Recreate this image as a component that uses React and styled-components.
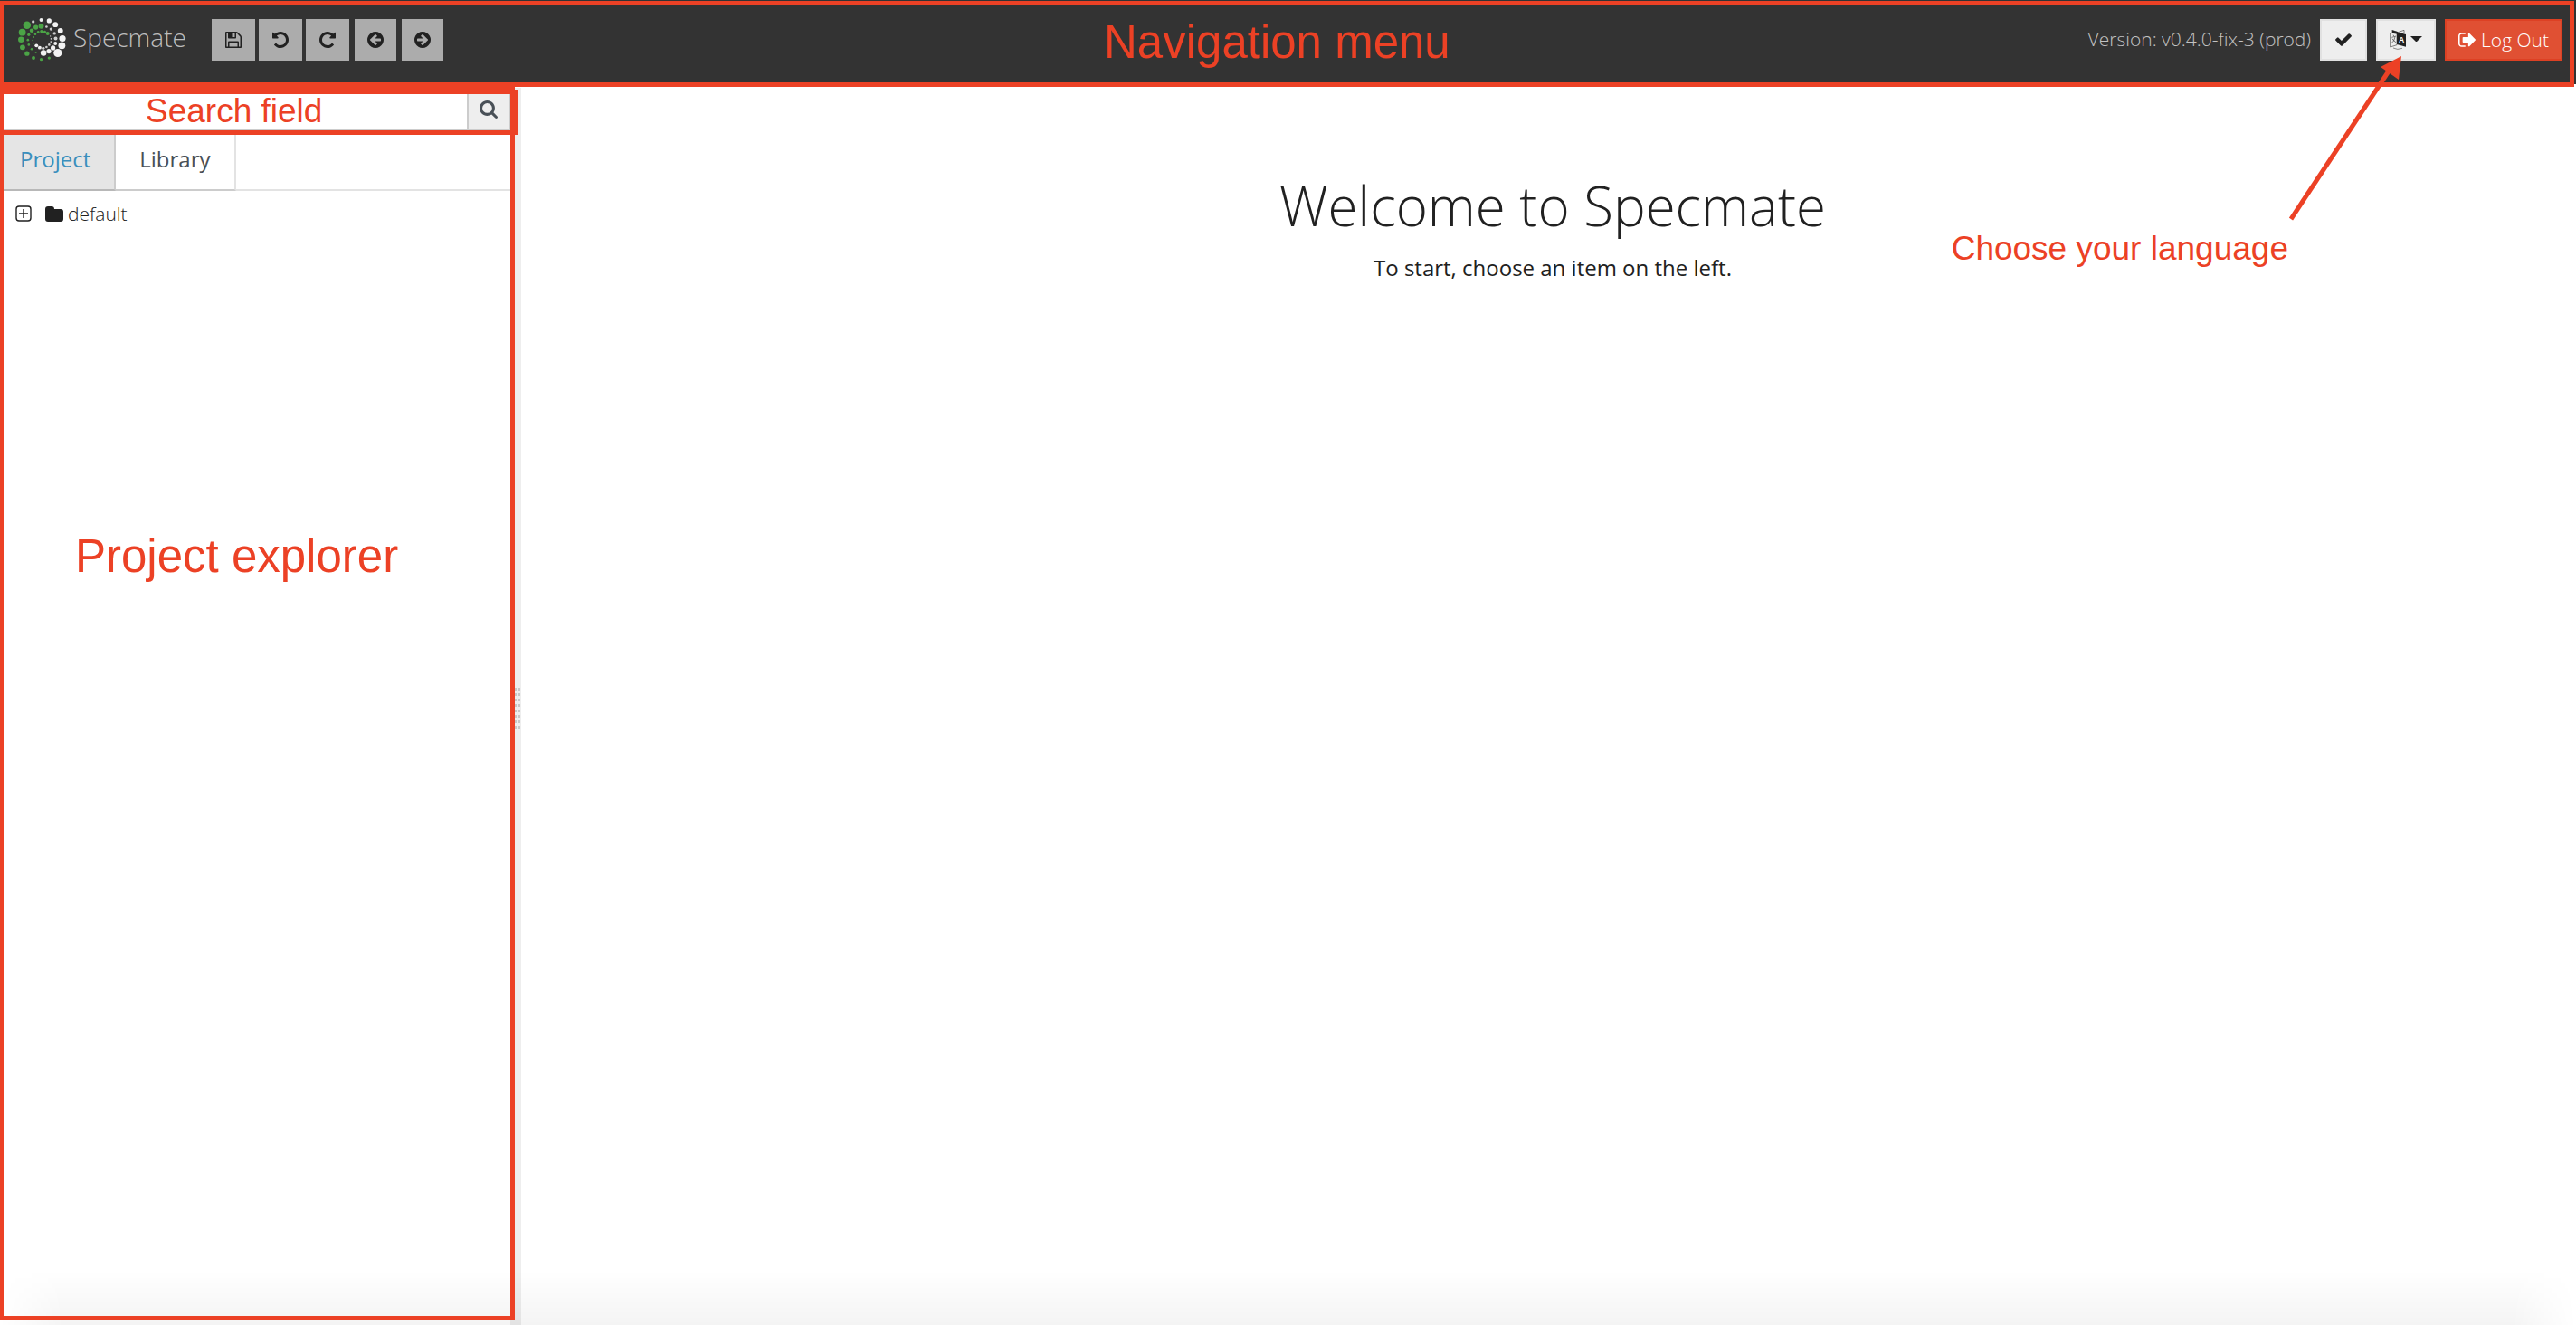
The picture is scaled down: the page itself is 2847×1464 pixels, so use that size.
import React from "react";
import styled, { createGlobalStyle, css } from "styled-components";

const red = "#ec4125";
const ink = "#212121";

const GlobalStyle = createGlobalStyle`
  *, *::before, *::after { box-sizing: border-box; }
  body {
    margin: 0;
    background: #fff;
    color: ${ink};
    font-family: "Open Sans", "Noto Sans", sans-serif;
    font-weight: 300;
    font-size: 21px;
    line-height: 32px;
  }
  button, input { font: inherit; color: inherit; margin: 0; }
`;

const Page = styled.div`
  position: relative;
  display: flex;
  flex-direction: column;
  min-height: 100vh;
`;

const Header = styled.header`
  position: relative;
  display: flex;
  justify-content: space-between;
  align-items: flex-start;
  padding: 21px 15px 26px 20px;
  background: #333;
`;

const Brand = styled.a`
  display: flex;
  align-items: center;
  gap: 8px;
  width: 214px;
  height: 44px;
  color: #bdbdbd;
  font-size: 28px;
  line-height: 40px;
  text-decoration: none;
`;

const BrandMark = styled.svg`
  flex: none;
  width: 53px;
  height: 48px;
`;

const BrandName = styled.span`
  padding-bottom: 6px;
`;

const HeaderSide = styled.div`
  display: flex;
  align-items: center;
  gap: ${(p) => p.$gap || 0}px;
`;

const ToolGroup = styled.div`
  display: flex;
  gap: ${(p) => p.$gap}px;
  margin-right: 6px;
`;

const ToolButton = styled.button`
  display: flex;
  align-items: center;
  justify-content: center;
  width: ${(p) => p.$width}px;
  height: 46px;
  padding: 0;
  border: 0;
  background: #acacac;
  color: ${ink};
`;

const variants = {
  light: css`
    background: #eee;
    border-color: #e1e1e1;
    color: ${ink};
  `,
  danger: css`
    background: #e05033;
    border-color: #dd4124;
    color: #fff;
  `,
};

const ActionButton = styled.button`
  display: flex;
  align-items: center;
  justify-content: center;
  gap: ${(p) => p.$gap || 0}px;
  height: 46px;
  padding: 0 13px;
  border: 2px solid;
  line-height: 32px;
  ${(p) => variants[p.$variant]}
`;

const Version = styled.span`
  padding-bottom: 2px;
  color: #c2c2c2;
`;

const Glyph = styled.svg`
  display: block;
  flex: none;
  width: ${(p) => p.$w}px;
  height: ${(p) => p.$h || p.$w}px;
  fill: currentColor;
`;

const Body = styled.div`
  display: flex;
  flex: 1;
`;

const Sidebar = styled.aside`
  display: flex;
  flex-direction: column;
  flex: none;
  width: 564px;
  padding-top: 4px;
`;

const SearchRow = styled.form`
  display: flex;
  height: 47px;
`;

const SearchInput = styled.input`
  flex: 1;
  min-width: 0;
  padding: 0 12px;
  border: 2px solid #ccc;
  background: #fff;
  outline: none;
`;

const SearchButton = styled.button`
  display: flex;
  align-items: center;
  justify-content: center;
  width: 46px;
  padding: 0;
  border: 2px solid #ccc;
  border-left: 0;
  background: #eee;
  color: #495057;
`;

const Tabs = styled.nav`
  display: flex;
  height: 67px;
  border-bottom: 2px solid #e3e3e3;
`;

const Tab = styled.a`
  height: 67px;
  padding: 16px 26px 0 ${(p) => (p.$active ? 22 : 26)}px;
  border-right: 2px solid ${(p) => (p.$active ? "#ccc" : "#e3e3e3")};
  border-bottom: 2px solid ${(p) => (p.$active ? "#b8b8b8" : "#ccc")};
  background: ${(p) => (p.$active ? "#e5e5e5" : "#fff")};
  color: ${(p) => (p.$active ? "#3a8fbd" : "#495057")};
  font-size: 24px;
  font-weight: 400;
  text-decoration: none;
`;

const Tree = styled.ul`
  margin: 0;
  padding: 9px 17px;
  list-style: none;
`;

const TreeItem = styled.li`
  display: flex;
  align-items: center;
`;

const TreeToggle = styled.button`
  display: flex;
  padding: 0;
  border: 0;
  background: none;
  margin-right: 15px;
`;

const TreeLink = styled.a`
  display: flex;
  align-items: center;
  gap: 5px;
  color: ${ink};
  text-decoration: none;
`;

const Splitter = styled.div`
  display: flex;
  flex: none;
  align-items: center;
  justify-content: flex-end;
  width: 12px;
  margin-top: 4px;
  padding-right: 1px;
  background: #eee;
`;

const Grip = styled.span`
  width: 8px;
  height: 48px;
  background: conic-gradient(from 90deg at 1px 3px, transparent 270deg, transparent 0) 0 0 / 4px 6px,
    linear-gradient(#eee 50%, transparent 50%) 0 0 / 8px 6px,
    linear-gradient(90deg, #eee 25%, #c8c8c8 25%) 0 0 / 4px 6px;
`;

const Main = styled.main`
  flex: 1;
  padding: 88px 0 0 9px;
  text-align: center;
`;

const Title = styled.h1`
  margin: 0;
  font-size: 60px;
  font-weight: 300;
  line-height: 92px;
`;

const Lead = styled.p`
  margin: 7px 0 0;
  font-size: 24px;
  font-weight: 400;
  line-height: 32px;
`;

const BottomShade = styled.div`
  position: absolute;
  right: 0;
  bottom: 0;
  left: 0;
  height: 60px;
  background: linear-gradient(transparent, rgba(0, 0, 0, 0.045));
  mask-image: linear-gradient(90deg, transparent, #000 70px, #000 calc(100% - 70px), transparent);
  pointer-events: none;
`;

const Frame = styled.div`
  position: absolute;
  top: ${(p) => p.$top}px;
  right: ${(p) => p.$right || "auto"};
  bottom: ${(p) => p.$bottom || "auto"};
  left: 0;
  width: ${(p) => p.$width || "auto"};
  height: ${(p) => p.$height || "auto"};
  border: 5px solid ${red};
  border-left-width: 4px;
  pointer-events: none;
`;

const Callout = styled.div`
  position: absolute;
  top: ${(p) => p.$top}px;
  left: ${(p) => p.$left || "auto"};
  right: ${(p) => p.$right || "auto"};
  color: ${red};
  font-family: "Liberation Sans", Arial, sans-serif;
  font-weight: 400;
  font-size: ${(p) => p.$size}px;
  line-height: 1;
  white-space: nowrap;
  pointer-events: none;
`;

const Arrow = styled.svg`
  position: absolute;
  top: 60px;
  right: 187px;
  width: 130px;
  height: 190px;
  pointer-events: none;
`;

const GREEN = "#4ba446";
const WHITE = "#f2f2f2";
const DIM = "#cfcfcf";
const dots = [
  [47, 44, 13, GREEN], [31, 68, 12, GREEN], [27, 93, 10, GREEN], [32, 119, 9, GREEN],
  [47, 140, 8, GREEN], [69, 155, 6, GREEN], [95, 160, 5, GREEN], [122, 155, 5, GREEN],
  [68, 32, 5, DIM], [95, 26, 6, WHITE], [122, 29, 8, WHITE], [143, 42, 9, WHITE],
  [160, 63, 9, WHITE], [167, 89, 11, WHITE], [165, 113, 12, WHITE], [151, 138, 14, WHITE],
  [95, 47, 9, GREEN], [77, 51, 8, GREEN], [63, 62, 7, GREEN], [53, 76, 5, GREEN],
  [50, 94, 4, GREEN], [53, 110, 4, GREEN], [63, 125, 4, GREEN], [77, 136, 3, GREEN],
  [113, 49, 4, DIM], [128, 57, 5, DIM], [140, 72, 5, DIM], [144, 89, 6, DIM],
  [143, 106, 6, WHITE], [135, 121, 8, WHITE], [121, 132, 8, WHITE], [103, 138, 10, WHITE],
  [117, 72, 6, GREEN], [107, 67, 5, GREEN], [96, 65, 5, GREEN], [85, 67, 4, GREEN],
  [75, 74, 4, GREEN], [69, 84, 3, GREEN], [66, 95, 2, GREEN], [69, 106, 2, GREEN],
  [79, 113, 6, WHITE], [90, 120, 6, WHITE], [102, 122, 5, DIM], [113, 118, 4, DIM],
  [122, 110, 4, DIM], [128, 100, 3, DIM], [129, 90, 3, DIM], [126, 81, 2, DIM],
];

const paths = {
  save: "M512 1536h768v-384h-768v384zm896 0h128v-896q0-14-10-38.5t-20-34.5l-281-281q-10-10-34-20t-39-10v416q0 40-28 68t-68 28h-576q-40 0-68-28t-28-68v-416h-128v1280h128v-416q0-40 28-68t68-28h832q40 0 68 28t28 68v416zm-384-928v-320q0-13-9.5-22.5t-22.5-9.5h-192q-13 0-22.5 9.5t-9.5 22.5v320q0 13 9.5 22.5t22.5 9.5h192q13 0 22.5-9.5t9.5-22.5zm640 32v928q0 40-28 68t-68 28h-1344q-40 0-68-28t-28-68v-1344q0-40 28-68t68-28h928q40 0 88 20t76 48l280 280q28 28 48 76t20 88z",
  undo: "M1536 896q0 156-61 298t-164 245-245 164-298 61q-172 0-327-72.5t-264-204.5q-7-10-6.5-22.5t8.5-20.5l137-138q10-9 25-9 16 2 23 12 73 95 179 147t225 52q104 0 198.5-40.5t163.5-109.5 109.5-163.5 40.5-198.5-40.5-198.5-109.5-163.5-163.5-109.5-198.5-40.5q-98 0-188 35.5t-160 101.5l137 138q31 30 14 69-17 40-59 40h-448q-26 0-45-19t-19-45v-448q0-42 40-59 39-17 69 14l130 129q107-101 244.5-156.5t284.5-55.5q156 0 298 61t245 164 164 245 61 298z",
  back: "M1408 960v-128q0-26-19-45t-45-19h-502l189-189q19-19 19-45t-19-45l-91-91q-18-18-45-18t-45 18l-362 362-91 91q-18 18-18 45t18 45l91 91 362 362q18 18 45 18t45-18l91-91q18-18 18-45t-18-45l-189-189h502q26 0 45-19t19-45zm256-64q0 209-103 385.5t-279.5 279.5-385.5 103-385.5-103-279.5-279.5-103-385.5 103-385.5 279.5-279.5 385.5-103 385.5 103 279.5 279.5 103 385.5z",
  check: "M1671 566q0 40-28 68l-724 724-136 136q-28 28-68 28t-68-28l-136-136-362-362q-28-28-28-68t28-68l136-136q28-28 68-28t68 28l294 295 656-657q28-28 68-28t68 28l136 136q28 28 28 68z",
  search: "M1216 832q0-185-131.5-316.5t-316.5-131.5-316.5 131.5-131.5 316.5 131.5 316.5 316.5 131.5 316.5-131.5 131.5-316.5zm512 832q0 52-38 90t-90 38q-54 0-90-38l-343-342q-179 124-399 124-143 0-273.5-55.5t-225-150-150-225-55.5-273.5 55.5-273.5 150-225 225-150 273.5-55.5 273.5 55.5 225 150 150 225 55.5 273.5q0 220-124 399l343 343q37 37 37 90z",
  signOut: "M704 1440q0 4 1 20t.5 26.5-3 23.5-10 19.5-20.5 6.5h-320q-119 0-203.5-84.5t-84.5-203.5v-704q0-119 84.5-203.5t203.5-84.5h320q13 0 22.5 9.5t9.5 22.5q0 4 1 20t.5 26.5-3 23.5-10 19.5-20.5 6.5h-320q-66 0-113 47t-47 113v704q0 66 47 113t113 47h312l11.5 1 11.5 3 8 5.5 7 9 2 13.5zm928-544q0 26-19 45l-544 544q-19 19-45 19t-45-19-19-45v-288h-448q-26 0-45-19t-19-45v-384q0-26 19-45t45-19h448v-288q0-26 19-45t45-19 45 19l544 544q19 19 19 45z",
};

const editTools = [
  { label: "Save", path: paths.save, box: "128 128 1536 1536" },
  { label: "Undo", path: paths.undo, box: "0 128 1536 1536" },
  { label: "Redo", path: paths.undo, box: "0 128 1536 1536", flip: "translate(1536 0) scale(-1 1)" },
];
const historyTools = [
  { label: "Back", path: paths.back, box: "128 128 1536 1536" },
  { label: "Forward", path: paths.back, box: "128 128 1536 1536", flip: "translate(1792 0) scale(-1 1)" },
];

function Tool({ tool, width }) {
  return (
    <ToolButton type="button" aria-label={tool.label} $width={width}>
      <Glyph $w={18} viewBox={tool.box} aria-hidden="true">
        <path d={tool.path} transform={tool.flip} />
      </Glyph>
    </ToolButton>
  );
}

function LanguageIcon() {
  return (
    <Glyph $w={18} $h={22} viewBox="0 0 54 66" aria-hidden="true">
      <path d="M2 12 L24 7 V50 L2 57 Z" fill="none" stroke="#444" strokeWidth="2" />
      <path d="M8 1 L28 8 L48 1 V9" fill="none" stroke="#444" strokeWidth="2" />
      <path d="M8 1 L27 7 V14 L8 11 Z" />
      <path d="M24 7 L54 15 V56 L24 48 Z" />
      <path d="M7 25 L21 21 M12 17 L14 21 M18 23 Q16 38 6 44 M9 29 Q14 38 21 41" fill="none" stroke="#333" strokeWidth="2" />
      <text x="30" y="42" fill="#fff" fontFamily="Liberation Sans, sans-serif" fontWeight="700" fontSize="26">A</text>
      <path d="M12 60 Q26 68 42 61" fill="none" stroke="#555" strokeWidth="2" />
    </Glyph>
  );
}

export default function App() {
  return (
    <>
      <GlobalStyle />
      <Page>
        <Header>
          <HeaderSide>
            <Brand href="#">
              <BrandMark viewBox="17 20 162 147" aria-hidden="true">
                {dots.map(([x, y, r, fill]) => (
                  <circle key={`${x}-${y}`} cx={x} cy={y} r={r} fill={fill} />
                ))}
              </BrandMark>
              <BrandName>Specmate</BrandName>
            </Brand>
            <ToolGroup $gap={4}>
              {editTools.map((tool) => <Tool key={tool.label} tool={tool} width={48} />)}
            </ToolGroup>
            <ToolGroup $gap={6}>
              {historyTools.map((tool) => <Tool key={tool.label} tool={tool} width={46} />)}
            </ToolGroup>
          </HeaderSide>
          <HeaderSide $gap={10}>
            <Version>Version: v0.4.0-fix-3 (prod)</Version>
            <ActionButton type="button" aria-label="Check" $variant="light">
              <Glyph $w={22} $h={16} viewBox="-60 330 1912 1200" aria-hidden="true">
                <path d={paths.check} />
              </Glyph>
            </ActionButton>
            <ActionButton type="button" aria-label="Language" $variant="light" $gap={5}>
              <LanguageIcon />
              <Glyph $w={13} $h={12} viewBox="0 0 13 12" aria-hidden="true">
                <path d="M0 2h13L7 8H6z" />
              </Glyph>
            </ActionButton>
            <ActionButton type="button" $variant="danger" $gap={6}>
              <Glyph $w={19} $h={16} viewBox="64 256 1568 1280" aria-hidden="true">
                <path d={paths.signOut} />
              </Glyph>
              Log Out
            </ActionButton>
          </HeaderSide>
        </Header>

        <Body>
          <Sidebar>
            <SearchRow role="search">
              <SearchInput type="text" aria-label="Search" />
              <SearchButton type="button" aria-label="Search">
                <Glyph $w={20} viewBox="64 128 1664 1664" aria-hidden="true">
                  <path d={paths.search} />
                </Glyph>
              </SearchButton>
            </SearchRow>
            <Tabs>
              <Tab href="#project" $active>Project</Tab>
              <Tab href="#library">Library</Tab>
            </Tabs>
            <Tree>
              <TreeItem>
                <TreeToggle type="button" aria-label="Expand default">
                  <Glyph $w={18} viewBox="0 0 18 18" aria-hidden="true">
                    <rect x="1" y="1" width="16" height="16" rx="3" fill="none" stroke={ink} strokeWidth="1.4" />
                    <path d="M4 8.3h10v1.4H4zM8.3 4h1.4v10H8.3z" />
                  </Glyph>
                </TreeToggle>
                <TreeLink href="#default">
                  <Glyph $w={20} $h={17} viewBox="0 0 20 17" aria-hidden="true">
                    <path d="M3 0h4a3 3 0 0 1 3 3h7a3 3 0 0 1 3 3v8a3 3 0 0 1-3 3H3a3 3 0 0 1-3-3V3a3 3 0 0 1 3-3z" />
                  </Glyph>
                  default
                </TreeLink>
              </TreeItem>
            </Tree>
          </Sidebar>
          <Splitter role="separator" aria-orientation="vertical">
            <Grip />
          </Splitter>
          <Main>
            <Title>Welcome to Specmate</Title>
            <Lead>To start, choose an item on the left.</Lead>
          </Main>
        </Body>

        <BottomShade />
        <Frame $top={1} $right="2px" $height="95px" />
        <Frame $top={99} $width="572px" $height="50px" />
        <Frame $top={96} $width="569px" $bottom="5px" />
        <Callout $size={51} $top={21} $left="1220px">Navigation menu</Callout>
        <Callout $size={37} $top={104} $left="161px">Search field</Callout>
        <Callout $size={51} $top={589} $left="83px">Project explorer</Callout>
        <Callout $size={37} $top={256} $right="318px">Choose your language</Callout>
        <Arrow viewBox="0 0 130 190" aria-hidden="true">
          <path d="M2 182L113 14" stroke={red} strokeWidth="5" fill="none" />
          <path d="M124 2L101 14L121 28Z" fill={red} />
        </Arrow>
      </Page>
    </>
  );
}
